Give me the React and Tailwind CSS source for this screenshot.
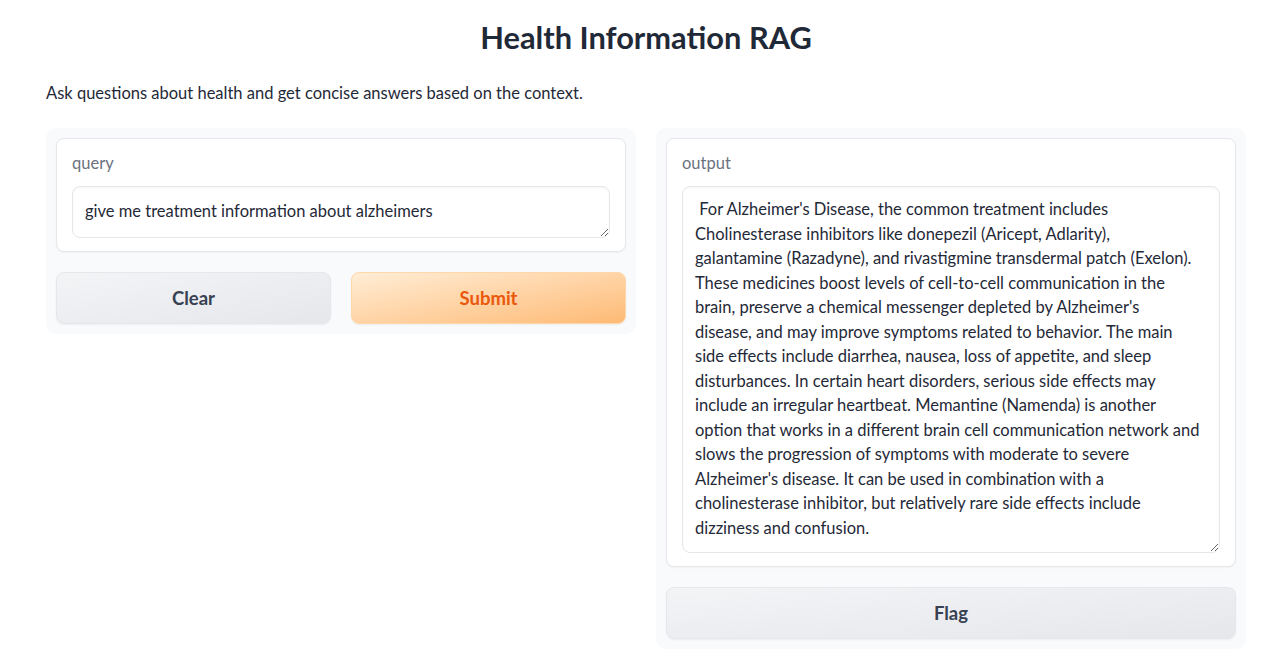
import React from "react";

const answerLines = [
	" For Alzheimer's Disease, the common treatment includes",
	"Cholinesterase inhibitors like donepezil (Aricept, Adlarity),",
	"galantamine (Razadyne), and rivastigmine transdermal patch (Exelon).",
	"These medicines boost levels of cell-to-cell communication in the",
	"brain, preserve a chemical messenger depleted by Alzheimer's",
	"disease, and may improve symptoms related to behavior. The main",
	"side effects include diarrhea, nausea, loss of appetite, and sleep",
	"disturbances. In certain heart disorders, serious side effects may",
	"include an irregular heartbeat. Memantine (Namenda) is another",
	"option that works in a different brain cell communication network and",
	"slows the progression of symptoms with moderate to severe",
	"Alzheimer's disease. It can be used in combination with a",
	"cholinesterase inhibitor, but relatively rare side effects include",
	"dizziness and confusion.",
];

function Block({ label, children }) {
	return (
		<div className="bg-white border border-[#e5e7eb] rounded-[8px] px-[15px] pt-[14px] pb-[13px] shadow-[0_1px_2px_rgba(0,0,0,0.04)]">
			<div className="text-[16.5px] leading-[20px] text-[#6b7280] mb-[13px]">{label}</div>
			{children}
		</div>
	);
}

function Button({ children, variant }) {
	const styles =
		variant === "primary"
			? "bg-gradient-to-br from-[#ffedd5] to-[#fdba74] border-[#fed7aa] text-[#ea580c]"
			: "bg-gradient-to-br from-[#f3f4f6] to-[#e5e7eb] border-[#e5e7eb] text-[#374151]";
	return (
		<button
			className={`h-[52px] w-full rounded-[8px] border pt-[2px] text-[18.5px] font-bold shadow-[0_1px_2px_rgba(0,0,0,0.05)] ${styles}`}
		>
			{children}
		</button>
	);
}

export default function App() {
	return (
		<div className="min-h-[660px] bg-white pl-[46px] pr-[20px] font-['Lato',sans-serif] text-[#1f2937]">
			<h1 className="pt-[19px] text-center text-[30.8px] leading-[38px] font-bold text-[#1f2937]">
				Health Information RAG
			</h1>
			<p className="mt-[26px] text-[16.5px] leading-[20px] text-[#1f2937]">
				Ask questions about health and get concise answers based on the context.
			</p>

			<div className="mt-[25px] flex gap-[20px] items-start">
				<div className="flex-1 bg-[#f9fafb] rounded-[10px] p-[10px] flex flex-col gap-[20px]">
					<Block label="query">
						<textarea
							readOnly
							rows={1}
							className="block w-full h-[52px] rounded-[8px] border border-[#e5e7eb] px-[12px] pt-[12px] pb-[13px] text-[16.5px] leading-[24px] text-[#1f2937] shadow-[inset_0_1px_2px_rgba(0,0,0,0.04)] outline-none resize-y"
							value="give me treatment information about alzheimers"
						/>
					</Block>
					<div className="flex gap-[20px]">
						<Button>Clear</Button>
						<Button variant="primary">Submit</Button>
					</div>
				</div>

				<div className="flex-1 bg-[#f9fafb] rounded-[10px] p-[10px] flex flex-col gap-[20px]">
					<Block label="output">
						<textarea
							readOnly
							className="block w-full h-[367px] rounded-[8px] border border-[#e5e7eb] pl-[12px] pr-[4px] pt-[10px] text-[16.5px] leading-[24.5px] text-[#1f2937] shadow-[inset_0_1px_2px_rgba(0,0,0,0.04)] outline-none resize-y overflow-hidden whitespace-pre"
							value={answerLines.join("\n")}
						/>
					</Block>
					<Button>Flag</Button>
				</div>
			</div>
		</div>
	);
}
